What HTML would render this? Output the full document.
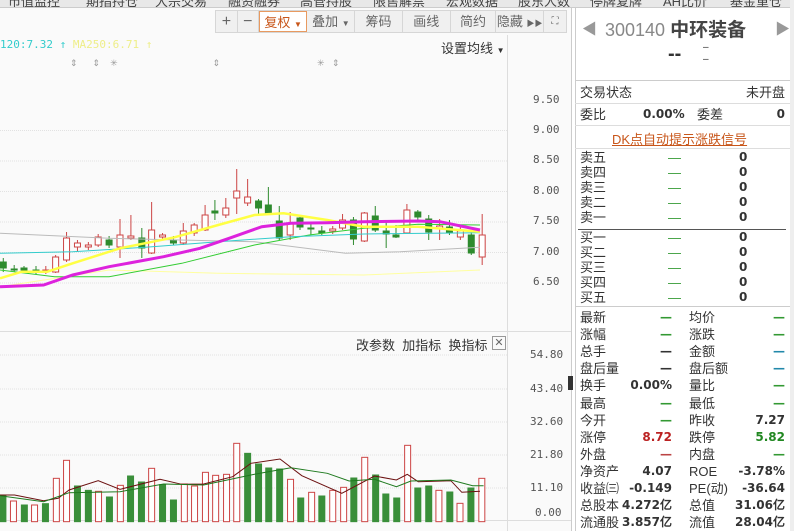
<!DOCTYPE html>
<html><head><meta charset="utf-8"><style>
*{margin:0;padding:0;box-sizing:border-box}
body{width:794px;height:531px;overflow:hidden;background:#fff;font-family:"Liberation Sans","Noto Sans CJK SC",sans-serif;position:relative;font-size:13px;color:#333}
.a{position:absolute;white-space:nowrap}
.tabs{position:absolute;left:0;top:0;width:794px;height:8px;background:#e8e8e8;overflow:hidden;border-bottom:1px solid #ccc}
.tabs span{position:absolute;top:-9px;font-size:13px;color:#444}
.tb{position:absolute;top:10px;height:23px;left:215px;width:352px;background:#f0f0f0;border:1px solid #d6d6d6;display:flex}
.tb div{height:21px;line-height:21px;text-align:center;font-size:13px;color:#666;border-right:1px solid #d6d6d6}
.r{position:absolute;left:575px;width:219px}
.row{position:absolute;left:580px;width:205px;font-size:13px;height:17px;line-height:17px}
.row b{font-family:"DejaVu Sans","Liberation Sans",sans-serif;font-size:12px}
.ax{position:absolute;left:533px;font-family:"DejaVu Sans Mono",monospace;font-size:11px;color:#555}
</style></head><body>
<div class="tabs"><span style="left:8px">市值监控</span><span style="left:86px">期指持仓</span><span style="left:155px">大宗交易</span><span style="left:228px">融资融券</span><span style="left:300px">高管持股</span><span style="left:373px">限售解禁</span><span style="left:446px">宏观数据</span><span style="left:518px">股东人数</span><span style="left:590px">停牌复牌</span><span style="left:663px">AH比价</span><span style="left:730px">基金重仓</span></div>
<div style="position:absolute;left:0;top:8px;width:572px;height:523px;background:#fafafa"></div>
<div class="tb"><div style="width:22px;font-size:16px">+</div><div style="width:21px;font-size:16px">−</div><div style="width:49px;color:#c8561a;border:1px solid #e89a60;background:#fff">复权 <span style="font-size:8px">▼</span></div><div style="width:48px">叠加 <span style="font-size:8px">▼</span></div><div style="width:48px">筹码</div><div style="width:48px">画线</div><div style="width:46px">简约</div><div style="width:48px">隐藏 <span style="font-size:8px">▶▶</span></div><div style="width:22px;border:none;font-size:10px">⛶</div></div>
<div class="a" style="left:0;top:38px;font-family:'DejaVu Sans Mono',monospace;font-size:11px;color:#3cc;">120:7.32 ↑ <span style="color:#ee8">MA250:6.71 ↑</span></div>
<div class="a" style="left:441px;top:38px;font-size:13px;color:#333">设置均线 <span style="font-size:8px">▼</span></div>
<div class="a" style="left:70px;top:58px;font-size:9px;color:#999;letter-spacing:0">⇕ &nbsp; &nbsp; &nbsp;⇕ &nbsp; &nbsp;✳ &nbsp; &nbsp; &nbsp; &nbsp; &nbsp; &nbsp; &nbsp; &nbsp; &nbsp; &nbsp; &nbsp; &nbsp; &nbsp; &nbsp; &nbsp; &nbsp; &nbsp; &nbsp; &nbsp;⇕</div>
<div class="a" style="left:317px;top:58px;font-size:9px;color:#999">✳ &nbsp; ⇕</div>
<svg id="sv" width="572" height="531" style="position:absolute;left:0;top:0">
<line x1="507.5" y1="35" x2="507.5" y2="531" stroke="#ddd"/>
<line x1="0" y1="331.5" x2="572" y2="331.5" stroke="#ddd"/>
<line x1="0" y1="520.5" x2="572" y2="520.5" stroke="#ddd"/>
<line x1="571.5" y1="8" x2="571.5" y2="531" stroke="#ccc"/>
<g id="g"></g>
</svg>
<div class="ax" style="top:93px">9.50</div><div class="ax" style="top:123px">9.00</div><div class="ax" style="top:153px">8.50</div><div class="ax" style="top:184px">8.00</div><div class="ax" style="top:214px">7.50</div><div class="ax" style="top:245px">7.00</div><div class="ax" style="top:275px">6.50</div>
<div class="ax" style="top:348px;left:530px">54.80</div><div class="ax" style="top:382px;left:530px">43.40</div><div class="ax" style="top:415px;left:530px">32.60</div><div class="ax" style="top:448px;left:530px">21.80</div><div class="ax" style="top:481px;left:530px">11.10</div><div class="ax" style="top:506px;left:535px">0.00</div>
<div class="a" style="left:356px;top:335px;font-size:13px">改参数 &nbsp;加指标 &nbsp;换指标</div>
<div class="a" style="left:492px;top:336px;width:14px;height:14px;border:1px solid #999;font-size:11px;line-height:12px;text-align:center;color:#666">✕</div>
<div class="a" style="left:568px;top:376px;width:5px;height:14px;background:#333"></div>
<div class="a" style="left:790px;top:0;width:4px;height:531px;background:#eee"></div>
<div class="r" style="top:8px;height:523px;border-left:1px solid #ccc;background:#fff;width:215px"></div>
<div class="a" style="left:582px;top:18px;font-size:15px;color:#999">◀</div>
<div class="a" style="left:775px;top:18px;font-size:15px;color:#999">▶</div>
<div class="a" style="left:605px;top:15px;font-size:18px;color:#888">300140 <b style="font-size:19px;color:#444">中环装备</b></div>
<div class="a" style="left:668px;top:43px;font-size:20px;font-weight:bold;color:#333">--</div>
<div class="a" style="left:703px;top:42px;font-size:10px;color:#333;line-height:12px">–<br>–</div>
<div class="a" style="left:575px;top:80px;width:215px;border-top:1px solid #ccc"></div>
<div class="row" style="top:84px">交易状态<span style="position:absolute;right:0">未开盘</span></div>
<div class="a" style="left:575px;top:103px;width:215px;border-top:1px solid #ddd"></div>
<div class="row" style="top:106px">委比<b style="position:absolute;left:63px">0.00%</b><span style="position:absolute;left:117px">委差</span><b style="position:absolute;right:0">0</b></div>
<div class="a" style="left:575px;top:125px;width:215px;border-top:1px solid #ddd"></div>
<div class="a" style="left:612px;top:129px;font-size:13px;color:#c8561a;text-decoration:underline">DK点自动提示涨跌信号</div>
<div class="a" style="left:575px;top:148px;width:215px;border-top:1px solid #ddd"></div>
<div id="ob"></div>
<div class="a" style="left:578px;top:229px;width:208px;border-top:1px solid #555"></div>
<div class="a" style="left:575px;top:306px;width:215px;border-top:1px solid #ccc"></div>
<div id="st"></div>
<script>
var g=document.getElementById('g'),h='';
for(var y of [130.5,161,191.5,222,252.5,283])h+='<line x1="0" y1="'+y+'" x2="507" y2="'+y+'" stroke="#e2e2e2" stroke-dasharray="1,1"/>';
for(var y of [355,389,422,455,488])h+='<line x1="0" y1="'+y+'" x2="507" y2="'+y+'" stroke="#e2e2e2" stroke-dasharray="1,1"/>';
var C=[[3,262,268,258,272,0],[13,269,270,265,272,0],[22,268,270,266,272,0],[33,270,271,266,274,0],[42,270,271,266,274,1],[51,257,272,255,273,1],[61,238,260,232,262,1],[71,243,247,240,252,1],[81,245,247,242,250,1],[90,237,245,234,247,1],[100,240,245,236,248,0],[110,235,247,219,258,1],[120,236,238,215,240,1],[130,238,248,228,258,0],[139,230,253,202,254,1],[149,235,237,233,240,1],[159,240,243,236,245,0],[168,231,243,223,245,1],[178,225,233,223,236,1],[188,215,230,205,231,1],[197,211,213,200,220,0],[207,208,215,198,218,1],[217,191,198,169,214,1],[227,197,203,179,206,1],[237,201,208,199,214,0],[246,205,213,187,215,0],[256,221,238,206,240,0],[266,223,235,212,240,1],[275,218,227,216,230,0],[285,228,229,222,235,0],[295,231,233,226,235,0],[305,229,231,226,234,1],[314,220,228,214,230,1],[324,220,239,217,245,0],[334,213,241,212,242,1],[344,216,230,206,232,0],[354,231,234,222,248,0],[363,235,237,225,238,0],[373,210,233,204,234,1],[383,212,217,210,222,0],[393,219,232,215,240,0],[403,226,228,219,240,1],[412,227,233,220,235,0],[422,231,237,226,240,1],[432,235,253,232,255,0],[442,235,257,214,265,1]];
function X(x){return x*1.0909}
for(var c of C){var x=X(c[0]),col=c[5]?'#c44':'#2e8b2e';
h+='<line x1="'+x+'" y1="'+c[3]+'" x2="'+x+'" y2="'+c[4]+'" stroke="'+col+'"/>';
var hh=Math.max(1,c[2]-c[1]);h+='<rect x="'+(x-3)+'" y="'+c[1]+'" width="6" height="'+hh+'" fill="'+(c[5]?'#fff':col)+'" stroke="'+col+'"/>';}
function P(pts,col,w){var s=pts.map(p=>(p[0]/2.75).toFixed(1)+','+(160+p[1]/3).toFixed(1)).join(' ');return '<polyline points="'+s+'" fill="none" stroke="'+col+'" stroke-width="'+w+'"/>'}
h+=P([[0,220],[300,235],[700,245],[950,280],[1100,275],[1320,262]],'#bbb',1);
h+=P([[0,380],[300,330],[600,340],[1000,345],[1320,330]],'#ffffa0',1);
h+=P([[0,330],[150,350],[300,350],[500,310],[700,255],[850,225],[1000,205],[1150,193],[1320,195]],'#3c3',1);
h+=P([[0,280],[200,275],[400,262],[600,245],[800,230],[1000,222],[1320,218]],'#3cc',1);
h+=P([[0,355],[60,335],[130,335],[200,310],[330,265],[480,232],[600,195],[700,165],[780,160],[900,180],[1000,200],[1150,200],[1320,215]],'#ff4',2.5);
h+=P([[0,380],[120,375],[200,345],[300,320],[450,290],[550,265],[630,235],[720,200],[800,190],[900,188],[1000,185],[1150,183],[1210,185],[1320,210]],'#d2d',3);
var V=[[8,497,0],[37,513,1],[67,525,0],[95,525,1],[125,521,0],[155,445,1],[183,391,1],[213,468,0],[243,481,0],[271,484,1],[301,501,0],[331,466,1],[359,438,0],[389,456,0],[417,415,1],[447,464,0],[477,510,0],[507,462,1],[535,468,1],[565,427,1],[593,436,1],[623,433,1],[651,340,1],[681,370,0],[711,402,0],[739,414,0],[769,417,0],[799,448,1],[827,504,0],[857,487,1],[885,498,0],[915,481,1],[945,472,1],[973,444,0],[1003,382,1],[1033,435,0],[1061,492,0],[1091,504,0],[1121,346,1],[1149,474,0],[1179,468,0],[1207,481,1],[1237,486,0],[1265,520,1],[1295,474,0],[1325,445,1]];
for(var v of V){var x=v[0]/2.75,t=330+v[1]/3,b=330+575/3,col=v[2]?'#c44':'#3a8f3a';
h+='<rect x="'+(x-3)+'" y="'+t+'" width="6" height="'+(b-t)+'" fill="'+(v[2]?'#fff':col)+'" stroke="'+col+'"/>';}
function Q(pts,col){var s=pts.map(p=>(p[0]/2.75).toFixed(1)+','+(330+p[1]/3).toFixed(1)).join(' ');return '<polyline points="'+s+'" fill="none" stroke="'+col+'" stroke-width="1"/>'}
h+=Q([[0,495],[40,495],[120,512],[160,505],[190,480],[270,452],[330,478],[440,448],[500,463],[560,462],[640,440],[690,400],[770,387],[830,437],[940,490],[1030,438],[1090,450],[1120,433],[1150,455],[1240,452],[1270,487],[1320,484]],'#6b1010');
h+=Q([[0,497],[120,515],[190,488],[330,485],[450,462],[560,465],[700,433],[800,413],[900,430],[960,453],[1030,448],[1090,470],[1130,453],[1240,450],[1300,467],[1330,467]],'#1f7a1f');
g.innerHTML=h;
var ob='',n=['卖五','卖四','卖三','卖二','卖一','买一','买二','买三','买四','买五'];
for(var i=0;i<10;i++){var y=(i<5?150+i*15:230+(i-5)*15);ob+='<div class="row" style="top:'+y+'px;line-height:15px;height:15px">'+n[i]+'<span style="position:absolute;left:88px;color:#393">—</span><b style="position:absolute;left:159px">0</b></div>';}
document.getElementById('ob').innerHTML=ob;
var S=[['最新','—','均价','—','#393','#393'],['涨幅','—','涨跌','—','#393','#393'],['总手','—','金额','—','#333','#28a'],['盘后量','—','盘后额','—','#333','#28a'],['换手','0.00%','量比','—','#333','#393'],['最高','—','最低','—','#393','#393'],['今开','—','昨收','7.27','#393','#333'],['涨停','8.72','跌停','5.82','#b22','#282'],['外盘','—','内盘','—','#b44','#393'],['净资产','4.07','ROE','-3.78%','#333','#333'],['收益㈢','-0.149','PE(动)','-36.64','#333','#333'],['总股本','4.272亿','总值','31.06亿','#333','#333'],['流通股','3.857亿','流值','28.04亿','#333','#333']];
var st='';S.forEach(function(s,i){var y=309+i*17.1;st+='<div class="row" style="top:'+y+'px">'+s[0]+'<b style="position:absolute;right:113px;color:'+s[4]+'">'+s[1]+'</b><span style="position:absolute;left:109px">'+s[2]+'</span><b style="position:absolute;right:0;color:'+s[5]+'">'+s[3]+'</b></div>'});
document.getElementById('st').innerHTML=st;
</script>
</body></html>
